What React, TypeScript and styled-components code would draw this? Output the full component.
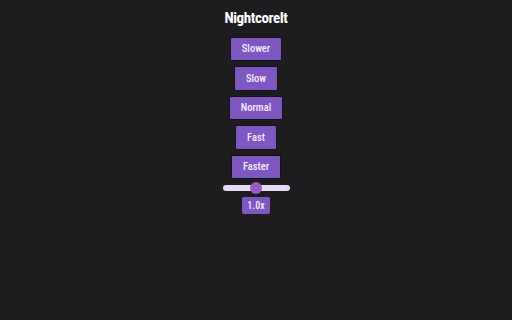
import React, { useState } from "react";
import styled, { createGlobalStyle } from "styled-components";

const Global = createGlobalStyle`
  html, body { margin: 0; padding: 0; background: #1e1c1f; }
  body { font-family: "Roboto Condensed", Roboto, "Liberation Sans", sans-serif; }
`;

const Page = styled.div`
  width: 512px;
  height: 320px;
  display: flex;
  flex-direction: column;
  align-items: center;
  box-sizing: border-box;
  padding-top: 8.5px;
`;

const Title = styled.h1`
  margin: 0 0 10px;
  font-family: "Roboto Condensed", Roboto, sans-serif;
  font-size: 15px;
  line-height: 18px;
  letter-spacing: -0.4px;
  font-weight: 700;
  color: #ffffff;
`;

const Buttons = styled.div`
  display: flex;
  flex-direction: column;
  align-items: center;
  gap: 5px;
`;

const SpeedButton = styled.button`
  height: 24.5px;
  padding: 0 11px;
  box-sizing: border-box;
  border: 1px solid #141214;
  border-radius: 2px;
  background: #7e57c2;
  color: #f3eefa;
  font-family: "Roboto Condensed", Roboto, sans-serif;
  font-size: 10.5px;
  font-weight: 500;
  cursor: pointer;
`;

const Range = styled.input`
  -webkit-appearance: none;
  appearance: none;
  width: 67px;
  height: 12px;
  margin: 2.5px 0 0;
  background: transparent;
  &::-webkit-slider-runnable-track {
    height: 6px;
    border-radius: 3px;
    background: #e8d9f7;
  }
  &::-webkit-slider-thumb {
    -webkit-appearance: none;
    width: 12px;
    height: 12px;
    margin-top: -3px;
    border-radius: 50%;
    background: #9a5cba;
    border: none;
  }
`;

const Label = styled.div`
  margin-top: 3.5px;
  height: 17px;
  padding: 0 5.5px;
  box-sizing: border-box;
  display: flex;
  align-items: center;
  border-radius: 2px;
  background: #7e57c2;
  color: #f3eefa;
  font-family: "Roboto Condensed", Roboto, sans-serif;
  font-size: 10px;
  font-weight: 500;
`;

const speeds = ["Slower", "Slow", "Normal", "Fast", "Faster"];

export default function App() {
  const [v, setV] = useState(1);
  return (
    <Page>
      <Global />
      <Title>NightcoreIt</Title>
      <Buttons>
        {speeds.map((s) => (
          <SpeedButton key={s}>{s}</SpeedButton>
        ))}
      </Buttons>
      <Range
        type="range"
        min={0.5}
        max={1.5}
        step={0.1}
        value={v}
        onChange={(e) => setV(parseFloat(e.target.value))}
      />
      <Label>{v.toFixed(1)}x</Label>
    </Page>
  );
}
